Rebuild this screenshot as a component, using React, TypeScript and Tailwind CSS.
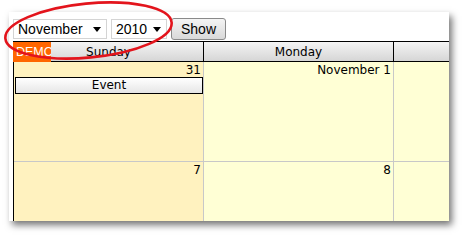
const cellFont = { fontFamily: '"DejaVu Sans", Tahoma, sans-serif' }

const days = [
  { label: 'Sunday', week: ['31', '7'], bg: 'bg-[#fff2bf]' },
  { label: 'Monday', week: ['November 1', '8'], bg: 'bg-[#ffffd5]' },
  { label: '', week: ['', ''], bg: 'bg-[#ffffd5]' },
]

function Select({ value, width }: { value: string; width: string }) {
  return (
    <div
      className={`flex h-[20px] ${width} items-center justify-between border border-[#d4d4d4] bg-white pl-[4px] pr-[5px] text-[14px] text-black`}
    >
      <span>{value}</span>
      <svg width="8" height="5" viewBox="0 0 8 5">
        <path d="M0 0 L8 0 L4 5 Z" fill="#000" />
      </svg>
    </div>
  )
}

export default function App() {
  return (
    <div
      className="relative h-[241px] w-[464px] overflow-hidden bg-white pl-[9px] pt-[12px]"
      style={{ fontFamily: '"Liberation Sans", Arial, sans-serif' }}
    >
      <div className="h-[209px] w-[440px] overflow-hidden bg-white shadow-[3px_4px_7px_rgba(0,0,0,0.55)]">
        <div className="mb-[1px] mt-[6px] flex h-[22px] items-center gap-[4px] pl-[4px]">
          <Select value="November" width="w-[94px]" />
          <Select value="2010" width="w-[56px]" />
          <button className="h-[22px] w-[55px] rounded-[3px] border border-[#8a8a8a] bg-gradient-to-b from-[#f4f4f4] to-[#d9d9d9] text-[14px] text-black">
            Show
          </button>
        </div>

        <div className="relative ml-[4px] w-[600px] border-l border-black" style={cellFont}>
          <div className="flex h-[21px] border-y border-black bg-gradient-to-b from-[#f4f4f4] to-[#d6d6d6] text-[12px] text-black">
            {days.map((d, i) => (
              <div
                key={i}
                className="flex w-[190px] shrink-0 items-center justify-center border-r border-black leading-none"
              >
                {d.label}
              </div>
            ))}
          </div>

          <div
            className="absolute -left-[1px] top-[1px] h-[20px] w-[38px] overflow-hidden whitespace-nowrap bg-[#ff6600] pl-[3px] text-[12.5px] leading-[20px] text-white"
            style={{ fontFamily: '"Liberation Sans", Arial, sans-serif' }}
          >
            DEMO
          </div>

          {[0, 1].map((row) => (
            <div key={row} className="flex h-[100px] border-b border-[#c8c8c8]">
              {days.map((d, i) => (
                <div key={i} className={`w-[190px] shrink-0 border-r border-[#c8c8c8] ${d.bg}`}>
                  <div className="h-[15px] pr-[2px] pt-[2px] text-right text-[12px] leading-[13px] text-black">
                    {d.week[row]}
                  </div>
                  {row === 0 && i === 0 && (
                    <div className="ml-[1px] h-[17px] border border-black bg-gradient-to-b from-white to-[#e6e6e6] text-center text-[12px] leading-[15px] text-black">
                      Event
                    </div>
                  )}
                </div>
              ))}
            </div>
          ))}
        </div>
      </div>

      <svg className="pointer-events-none absolute left-0 top-0" width="464" height="241">
        <ellipse
          cx="88.5"
          cy="30.5"
          rx="83.5"
          ry="27"
          transform="rotate(-5.5 88.5 30.5)"
          fill="none"
          stroke="#e3141c"
          strokeWidth="2.6"
        />
      </svg>
    </div>
  )
}
